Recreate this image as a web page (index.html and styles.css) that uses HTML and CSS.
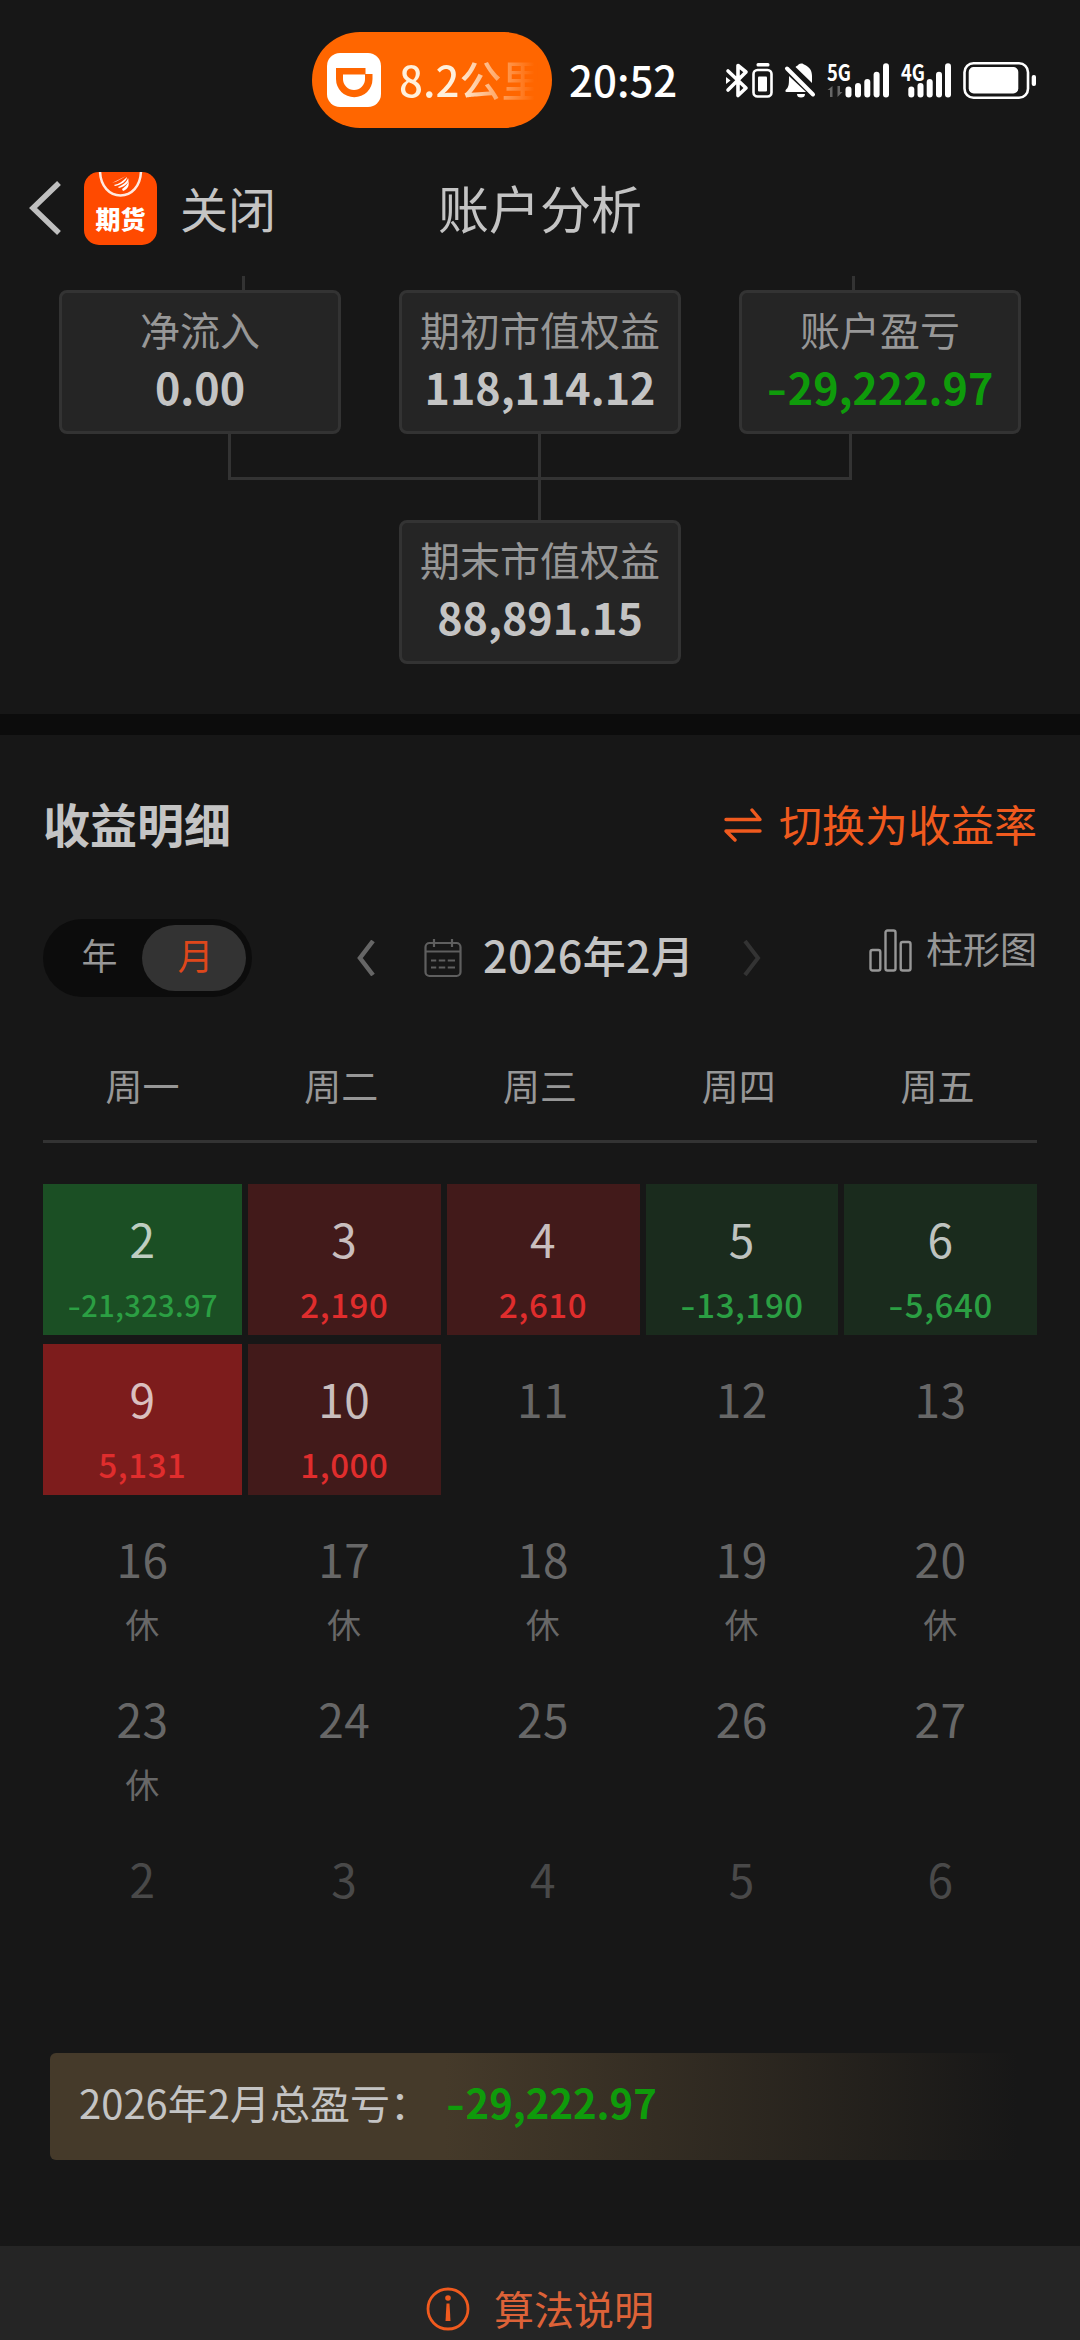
FILE: index.html
```html
<!DOCTYPE html>
<html lang="zh-CN">
<head>
  <meta charset="UTF-8">
  <title>账户分析</title>
  <meta name="viewport" content="width=device-width, initial-scale=1">
  <link rel="stylesheet" href="styles.css">
</head>
<body>
  <!-- 状态栏 -->
  <div class="status-bar">
    <div class="pill">
      <svg class="pill-icon" width="54" height="54" viewBox="0 0 54 54">
        <rect width="54" height="54" rx="13" fill="#fff"/>
        <path d="M9 15H38.5V21H45.5V26A18.2 18.2 0 0 1 9 26Z" fill="#ff6600"/>
        <path d="M16 21.5H38V26A11 11 0 0 1 16 26Z" fill="#fff"/>
      </svg>
      <span class="pill-text">8.2公里</span>
    </div>
    <span class="clock">20:52</span>
    <svg class="status-icons" width="314" height="80" viewBox="724 40 314 80">
      <!-- 蓝牙 -->
      <path d="M728 71L746 88L738 95.500V65.500L746 72L728 90" fill="none" stroke="#fff" stroke-width="3.600" stroke-linejoin="round" stroke-linecap="round"/>
      <path d="M726 77l4.500 3.500l-4.500 3.500z" fill="#fff"/>
      <rect x="756.500" y="63" width="13" height="3.400" rx="1.500" fill="#fff"/>
      <rect x="753.500" y="70" width="18" height="26.500" rx="4" fill="none" stroke="#fff" stroke-width="2.600"/>
      <rect x="758" y="76.500" width="9" height="15" rx="1" fill="#fff"/>
      <!-- 静音 -->
      <path d="M789 76L806 92H786.500C785 92 785 90 786.500 89C789 87 789 83 789 76Z" fill="#fff"/>
      <path d="M795.500 67C796.500 66 798 65.500 798.500 64.500C800 63 803 63 804 64.500C810 67 812 71 812 76V83Z" fill="#fff"/>
      <path d="M787 68.500L813 94.500" stroke="#fff" stroke-width="4" stroke-linecap="round"/>
      <path d="M797 94h8a4 3.500 0 0 1-8 0z" fill="#fff"/>
      <text x="827" y="81" class="net" textLength="24" lengthAdjust="spacingAndGlyphs">5G</text>
      <path d="M827.500 90l5-4v11h-2.500v-7zM842.500 92l-5 5v-11h2.500v6z" fill="#666"/>
      <g fill="#fff">
        <rect x="845.500" y="86.500" width="6" height="11" rx="3"/>
        <rect x="855" y="83" width="6" height="14.500" rx="3"/>
        <rect x="864.300" y="79" width="6" height="18.500" rx="3"/>
        <rect x="873.600" y="71.700" width="6" height="25.800" rx="3"/>
        <rect x="883" y="63.300" width="6" height="34.200" rx="3"/>
      </g>
      <text x="901" y="81" class="net" textLength="24" lengthAdjust="spacingAndGlyphs">4G</text>
      <g fill="#fff">
        <rect x="908.300" y="86.500" width="6" height="11" rx="3"/>
        <rect x="917.500" y="83" width="6" height="14.500" rx="3"/>
        <rect x="926.700" y="79" width="6" height="18.500" rx="3"/>
        <rect x="936" y="71.700" width="6" height="25.800" rx="3"/>
        <rect x="945" y="63.300" width="6" height="34.200" rx="3"/>
      </g>
      <!-- 电池 -->
      <rect x="964.500" y="63.200" width="63.500" height="34.600" rx="9" fill="none" stroke="#fff" stroke-width="2.600"/>
      <rect x="968.700" y="67" width="49.600" height="26.500" rx="5" fill="#fff"/>
      <rect x="1031.700" y="75" width="4.300" height="11" rx="2" fill="#fff"/>
    </svg>
  </div>

  <!-- 导航栏 -->
  <div class="nav">
    <div class="nav-left">
      <svg class="back" width="34" height="56" viewBox="0 0 34 56">
        <path d="M30 3L4 28L30 53" fill="none" stroke="#bfbfbf" stroke-width="5.500"/>
      </svg>
      <div class="app-icon">
        <svg width="73" height="32" viewBox="0 0 73 32">
          <path d="M16 -2C16 32 57 32 57 -2" fill="none" stroke="#ffe9df" stroke-width="2.500"/>
          <path d="M28 11L42 4C35 8 32 10 28 11ZM30 13C35 12 39 9 43 5C43 9 37 13 31 14ZM34 15C39 13 43 10 44 6C46 10 42 14 35 16ZM38 17C42 14 45 11 44 8C46 13 44 17 39 19Z" fill="#fff"/>
        </svg>
        <span class="app-name">期货</span>
      </div>
      <span class="close">关闭</span>
    </div>
    <h1>账户分析</h1>
  </div>

  <!-- 权益流程 -->
  <div class="flow">
    <svg width="1080" height="14" viewBox="0 0 1080 14">
      <path d="M243.500 0V14M853.500 0V14" stroke="#333" stroke-width="3"/>
    </svg>
    <div class="flow-row">
      <div class="card">
        <div class="card-label">净流入</div>
        <div class="card-value">0.00</div>
      </div>
      <div class="card">
        <div class="card-label">期初市值权益</div>
        <div class="card-value">118,114.12</div>
      </div>
      <div class="card">
        <div class="card-label">账户盈亏</div>
        <div class="card-value loss"><span class="dash">-</span>29,222.97</div>
      </div>
    </div>
    <svg width="1080" height="86" viewBox="0 0 1080 86">
      <path d="M229.500 0V44.500H850.500V0M539.500 0V86" fill="none" stroke="#333" stroke-width="3"/>
    </svg>
    <div class="flow-row">
      <div class="card">
        <div class="card-label">期末市值权益</div>
        <div class="card-value">88,891.15</div>
      </div>
    </div>
  </div>

  <!-- 收益明细 -->
  <div class="detail">
    <div class="detail-head">
      <h2>收益明细</h2>
      <div class="switch">
        <svg width="38" height="34" viewBox="0 0 38 34">
          <path d="M2 11.500H36L28 2M36 23H2L11 32" fill="none" stroke="#f05a1e" stroke-width="3.400" stroke-linecap="round" stroke-linejoin="round"/>
        </svg>
        <span>切换为收益率</span>
      </div>
    </div>

    <div class="toolbar">
      <div class="toggle">
        <span class="toggle-item">年</span>
        <span class="toggle-item active">月</span>
      </div>
      <div class="month">
        <svg width="20" height="36" viewBox="0 0 20 36">
          <path d="M17 1L4 18L17 35" fill="none" stroke="#666" stroke-width="4.500"/>
        </svg>
        <svg class="cal-icon" width="38" height="40" viewBox="0 0 38 40">
          <g fill="none" stroke="#5f5f5f" stroke-width="2.200">
            <rect x="1.500" y="5" width="35" height="33" rx="4"/>
            <path d="M1.500 13.500H36.500M10 1V9M28 1V9M7 22.500H31M7 29.500H31"/>
          </g>
          <path d="M13.500 20v12M22.500 20v12" stroke="#171717" stroke-width="2.500"/>
        </svg>
        <span class="month-text">2026年2月</span>
        <svg width="20" height="36" viewBox="0 0 20 36">
          <path d="M3 1L16 18L3 35" fill="none" stroke="#333" stroke-width="4"/>
        </svg>
      </div>
      <div class="chart-btn">
        <svg width="43" height="43" viewBox="0 0 43 43">
          <g fill="none" stroke="#979797" stroke-width="2.400">
            <rect x="1.500" y="21" width="9.800" height="20.500" rx="2"/>
            <rect x="16.500" y="1.500" width="10" height="40" rx="2"/>
            <rect x="31.700" y="13" width="9.800" height="28.500" rx="2"/>
          </g>
        </svg>
        <span>柱形图</span>
      </div>
    </div>

    <div class="week">
      <span>周一</span><span>周二</span><span>周三</span><span>周四</span><span>周五</span>
    </div>

    <div class="days">
      <div class="day down strong"><b>2</b><i class="small"><span class="dash">-</span>21,323.97</i></div>
      <div class="day up"><b>3</b><i>2,190</i></div>
      <div class="day up"><b>4</b><i>2,610</i></div>
      <div class="day down"><b>5</b><i><span class="dash">-</span>13,190</i></div>
      <div class="day down"><b>6</b><i><span class="dash">-</span>5,640</i></div>

      <div class="day up strong"><b>9</b><i>5,131</i></div>
      <div class="day up"><b>10</b><i>1,000</i></div>
      <div class="day"><b>11</b></div>
      <div class="day"><b>12</b></div>
      <div class="day"><b>13</b></div>

      <div class="day"><b>16</b><i class="rest">休</i></div>
      <div class="day"><b>17</b><i class="rest">休</i></div>
      <div class="day"><b>18</b><i class="rest">休</i></div>
      <div class="day"><b>19</b><i class="rest">休</i></div>
      <div class="day"><b>20</b><i class="rest">休</i></div>

      <div class="day"><b>23</b><i class="rest">休</i></div>
      <div class="day"><b>24</b></div>
      <div class="day"><b>25</b></div>
      <div class="day"><b>26</b></div>
      <div class="day"><b>27</b></div>

      <div class="day next"><b>2</b></div>
      <div class="day next"><b>3</b></div>
      <div class="day next"><b>4</b></div>
      <div class="day next"><b>5</b></div>
      <div class="day next"><b>6</b></div>
    </div>

    <div class="summary">
      <span class="summary-label">2026年2月总盈亏：</span>
      <span class="summary-value loss"><span class="dash">-</span>29,222.97</span>
    </div>
  </div>

  <div class="footer">
    <svg width="44" height="44" viewBox="0 0 44 44">
      <circle cx="22" cy="22" r="20" fill="none" stroke="#f05a1e" stroke-width="2.800"/>
      <circle cx="22" cy="11" r="2.800" fill="#f05a1e"/>
      <path d="M20.500 16.500h3l1 17.500h-5z" fill="#f05a1e"/>
    </svg>
    <span>算法说明</span>
  </div>
</body>
</html>
```

FILE: styles.css
```css
:root {
  --bg: #171717;
  --panel: #252525;
  --line: #333;
  --text: #c4c4c4;
  --muted: #979797;
  --orange: #f05a1e;
  --green: #0f9b0b;
}
* { margin: 0; padding: 0; box-sizing: border-box; }
body {
  width: 1080px;
  height: 2340px;
  overflow: hidden;
  display: flex;
  flex-direction: column;
  font-family: 'Noto Sans CJK SC', sans-serif;
  background: var(--bg);
  color: var(--text);
  white-space: nowrap;
}
svg { display: block; flex: none; }

.status-bar {
  height: 160px;
  padding-left: 312px;
  display: flex;
  align-items: center;
}
.pill {
  width: 240px;
  height: 96px;
  border-radius: 48px;
  background: #ff6600;
  display: flex;
  align-items: center;
  padding-left: 15px;
}
.pill-text {
  flex: none;
  margin-left: 18px;
  padding-bottom: 3px;
  font-size: 42px;
  font-weight: 500;
  line-height: 64px;
  background: linear-gradient(90deg, #fff0dc 40%, #ff6600 94%);
  -webkit-background-clip: text;
  background-clip: text;
  color: transparent;
}
.clock {
  width: 172px;
  padding-left: 17px;
  padding-bottom: 3px;
  font-size: 42px;
  font-weight: 500;
  line-height: 60px;
  color: #fff;
}
.net {
  font-family: 'Noto Sans CJK SC', sans-serif;
  font-size: 23px;
  font-weight: 700;
  fill: #fff;
}

.nav {
  height: 96px;
  margin-bottom: 20px;
  display: grid;
  grid-template-columns: 1fr auto 1fr;
  align-items: center;
}
.nav-left {
  display: flex;
  align-items: center;
  padding-left: 29px;
}
.app-icon {
  width: 73px;
  height: 73px;
  margin: 0 23px 0 21px;
  border-radius: 15px;
  background: #ff4a00;
  overflow: hidden;
}
.app-name {
  display: block;
  font-size: 25px;
  font-weight: 900;
  line-height: 28px;
  text-align: center;
  color: #fff;
}
.close {
  font-size: 48px;
  line-height: 60px;
  padding-bottom: 3px;
}
h1 {
  font-size: 51px;
  font-weight: 400;
  line-height: 60px;
  padding-bottom: 3px;
}

.flow-row {
  display: flex;
  justify-content: center;
  gap: 58px;
}
.card {
  width: 282px;
  height: 144px;
  padding-top: 12px;
  border: 3px solid var(--line);
  border-radius: 8px;
  background: var(--panel);
  text-align: center;
}
.card-label {
  font-size: 40px;
  line-height: 48px;
  color: var(--muted);
}
.card-value {
  margin-top: 5px;
  font-size: 43px;
  font-weight: 700;
  line-height: 56px;
}
.loss { color: var(--green); }
/* 加宽的负号 */
.dash {
  display: inline-block;
  transform: scaleX(1.3);
  margin: 0 .06em;
}

.detail {
  margin-top: 50px;
  padding: 56px 43px 0;
  border-top: 21px solid #0c0c0c;
}
.detail-head {
  display: flex;
  justify-content: space-between;
  align-items: center;
  height: 64px;
}
h2 {
  font-size: 47px;
  font-weight: 700;
  line-height: 60px;
}
.switch {
  display: flex;
  align-items: center;
  gap: 17px;
  font-size: 43px;
  line-height: 60px;
  color: var(--orange);
}
.switch svg { margin-top: 4px; }
.toolbar {
  display: flex;
  margin-top: 64px;
  height: 78px;
}
.toggle {
  width: 209px;
  height: 78px;
  padding: 6px;
  border-radius: 39px;
  background: #0c0c0c;
  display: flex;
}
.toggle-item {
  flex: 1;
  padding-left: 8px;
  font-size: 36px;
  line-height: 59px;
  text-align: center;
  color: var(--muted);
}
.toggle-item.active {
  flex: none;
  width: 104px;
  padding-left: 3px;
  border-radius: 33px;
  background: #333;
  color: #de471b;
}
.month {
  display: flex;
  align-items: center;
  margin-left: 104px;
}
.cal-icon { margin: 0 21px 0 48px; }
.month-text {
  width: 259px;
  font-size: 43px;
  font-weight: 500;
  letter-spacing: .4px;
  line-height: 60px;
  padding-bottom: 8px;
}
.chart-btn {
  display: flex;
  align-items: center;
  gap: 14px;
  height: 62px;
  margin-left: auto;
  font-size: 37px;
  color: var(--muted);
}
.chart-btn span { padding-bottom: 5px; }

.week {
  height: 86px;
  margin-top: 60px;
  border-bottom: 3px solid var(--line);
  display: grid;
  grid-template-columns: repeat(5, 1fr);
  font-size: 37px;
  line-height: 56px;
  text-align: center;
  color: var(--muted);
}
.days {
  margin-top: 41px;
  display: grid;
  grid-template-columns: 199px repeat(4, 1fr);
  grid-auto-rows: 151px;
  gap: 9px 6px;
  text-align: center;
}
.day {
  padding-top: 24px;
  color: #676767;
}
.day b {
  display: block;
  font-size: 46px;
  font-weight: 400;
  letter-spacing: .5px;
  line-height: 60px;
}
.day i {
  display: block;
  margin-top: 8px;
  font-style: normal;
  font-size: 33px;
  font-weight: 500;
  letter-spacing: .6px;
  line-height: 56px;
}
.day .small {
  font-size: 29px;
  letter-spacing: .4px;
}
.day .rest {
  font-size: 34px;
  font-weight: 400;
}
.up { background: #421a1a; }
.up.strong { background: #7d1c1c; }
.down { background: #1a2b1d; }
.down.strong { background: #1b4f24; }
.up b, .down b { color: rgba(255, 255, 255, .73); }
.up i { color: #e02d2d; }
.down i { color: #2b9f43; }
.next { color: #494949; }

.summary {
  display: flex;
  align-items: center;
  height: 107px;
  margin: 78px 0 0 7px;
  padding: 0 0 10px 29px;
  border-radius: 6px;
  background: linear-gradient(90deg, #453a2a 40%, #171717 98%);
}
.summary-label { font-size: 40px; }
.summary-value {
  margin-left: 16px;
  font-size: 40px;
  font-weight: 700;
}

.footer {
  flex: 1;
  margin-top: 86px;
  padding-top: 41px;
  background: var(--panel);
  display: flex;
  justify-content: center;
  align-items: flex-start;
  gap: 24px;
  font-size: 40px;
  line-height: 42px;
  color: #dd6238;
}
```
